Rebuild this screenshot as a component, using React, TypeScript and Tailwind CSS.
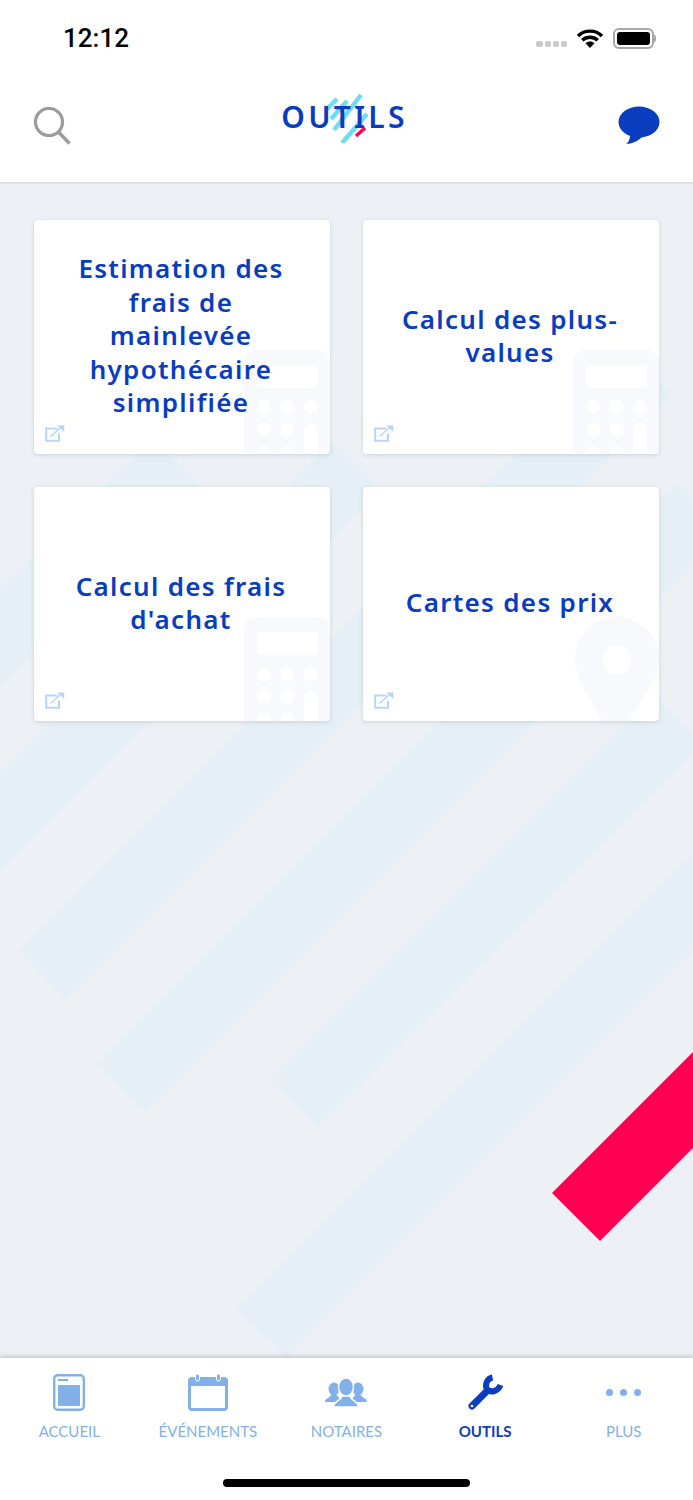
import type { ReactNode } from 'react';

const tools = [
  { title: 'Estimation des frais de mainlevée hypothécaire simplifiée', art: 'calc' },
  { title: 'Calcul des plus-values', art: 'calc' },
  { title: "Calcul des frais d'achat", art: 'calc' },
  { title: 'Cartes des prix', art: 'pin' },
];

function Calculator() {
  return (
    <svg className="absolute right-0 bottom-0" width="86" height="104" viewBox="0 0 86 104">
      <rect x="0" y="0" width="86" height="130" rx="12" fill="#f7f9fd" />
      <rect x="13" y="15" width="61" height="23" rx="4" fill="#fff" />
      <g fill="#fff">
        <circle cx="20" cy="57" r="7" />
        <circle cx="43.500" cy="57" r="7" />
        <circle cx="67" cy="57" r="7" />
        <circle cx="20" cy="80" r="7" />
        <circle cx="43.500" cy="80" r="7" />
        <circle cx="20" cy="103" r="7" />
        <circle cx="43.500" cy="103" r="7" />
        <rect x="60" y="73" width="14" height="50" rx="7" />
      </g>
    </svg>
  );
}

function Pin() {
  return (
    <svg className="absolute right-0 bottom-0" width="84" height="104" viewBox="0 0 84 104">
      <path d="M42 0C65 0 84 18 84 42C84 62 66 84 54 104H28C16 84 0 62 0 42C0 18 19 0 42 0Z" fill="#f7f9fd" />
      <circle cx="42" cy="43" r="14" fill="#fff" />
    </svg>
  );
}

function OpenIcon() {
  return (
    <svg className="absolute left-[11px] bottom-[12px]" width="20" height="17" viewBox="0 0 20 17" fill="none" stroke="#b7d5fc">
      <path d="M12 3.500H1.200V15.800H14V8.500" strokeWidth="2" />
      <path d="M5.500 11.500L16 2" strokeWidth="1.600" />
      <path d="M13 0.800H19V6.500Z" fill="#b7d5fc" strokeWidth="0.500" />
    </svg>
  );
}

function TabItem({ label, active, children }: { label: string; active?: boolean; children: ReactNode }) {
  return (
    <div className="flex flex-col items-center">
      <div className="h-[38px] flex items-center justify-center">{children}</div>
      <span
        className={
          active
            ? "mt-[10px] text-[15px] leading-[20px] font-bold text-[#0b3dbf] font-['Lato',sans-serif]"
            : "mt-[10px] text-[15px] leading-[20px] text-[#82b1e9] font-['Lato',sans-serif]"
        }
      >
        {label}
      </span>
    </div>
  );
}

export default function App() {
  return (
    <div className="w-[693px] h-[1500px] flex flex-col bg-white overflow-hidden">
      <header className="h-[184px] shrink-0 border-b-2 border-[#dfe1e3] bg-white">
        {/* status bar */}
        <div className="h-[76px] flex items-center justify-between pl-[63px] pr-[37px]">
          <span className="text-[26px] font-medium text-black font-['Roboto',sans-serif]">12:12</span>
          <div className="flex items-center">
            <div className="flex gap-[2px] mt-[12px] mr-[9px]">
              <i className="w-[7px] h-[6px] rounded-[2px] bg-[#c9c9c9]" />
              <i className="w-[6px] h-[6px] rounded-[2px] bg-[#c9c9c9]" />
              <i className="w-[6px] h-[6px] rounded-[2px] bg-[#c9c9c9]" />
              <i className="w-[6px] h-[6px] rounded-[2px] bg-[#c9c9c9]" />
            </div>
            <svg width="28" height="20" viewBox="0 0 28 20" className="mr-[9px]">
              <path d="M14 20L9.500 15.200C12 12.800 16 12.800 18.500 15.200Z" fill="#000" />
              <path d="M2 8C8.500 1.500 19.500 1.500 26 8M6.300 12.300C10.500 8.300 17.500 8.300 21.700 12.300" fill="none" stroke="#000" strokeWidth="3.400" />
            </svg>
            <div className="w-[41px] h-[21px] rounded-[6px] border-2 border-[#a8a8a8] p-[2px]">
              <div className="w-full h-full rounded-[3px] bg-black" />
            </div>
            <div className="w-[2px] h-[7px] rounded-r-[2px] bg-[#a8a8a8]" />
          </div>
        </div>
        {/* title row */}
        <div className="h-[106px] flex items-start justify-between pl-[33px] pr-[33px]">
          <svg width="38" height="38" viewBox="0 0 38 38" fill="none" stroke="#9b9b9b" className="mt-[31px]">
            <circle cx="16" cy="15" r="13.500" strokeWidth="3.200" />
            <path d="M25.500 25L36.500 36.500" strokeWidth="3.400" />
          </svg>
          <div className="relative mt-[18px]">
            <svg className="absolute left-[45px] top-[-3px]" width="44" height="52" viewBox="0 0 44 52" fill="none" stroke="#6fdcf3" strokeWidth="4.500">
              <path d="M1 18L11 8M5 28L21 10M8 39L35 4M16 52L41 23" />
              <path d="M30 45L39 37" stroke="#ff0055" strokeWidth="3.500" />
            </svg>
            <span className="relative block mt-[5px] text-[30px] leading-[36px] font-semibold tracking-[3.200px] text-[#0a3cc0] font-['Noto_Sans',sans-serif]">
              OUTILS
            </span>
          </div>
          <svg width="42" height="40" viewBox="0 0 42 40" className="mt-[30px]">
            <ellipse cx="21" cy="16" rx="20.500" ry="15.500" fill="#0a3cc0" />
            <path d="M12 28C12 33 11 36 8 38C14 38 20 35 24 31Z" fill="#0a3cc0" />
          </svg>
        </div>
      </header>

      <main className="relative flex-1 bg-[#edf1f5] overflow-hidden">
        {/* diagonal backdrop */}
        <svg className="absolute inset-0" width="693" height="1174" viewBox="0 184 693 1174">
          <g fill="#e5eff5">
            <polygon points="152.500,437.500 201,486 -60,747 -60,650" />
            <polygon points="331.500,441.500 380.500,490.500 -60,931 -60,833" />
            <polygon points="18,951 66,1000 672,394 624,346" />
            <polygon points="96,1064 146,1112 726,532 677,483" />
            <polygon points="270,1080 318,1127 703.500,743.500 655,695" />
            <polygon points="236,1310 286,1357 800,843 800,746" />
          </g>
          <polygon points="552,1193 600,1241 800,1041 752,993" fill="#ff0055" />
        </svg>
        <div className="relative grid grid-cols-2 gap-x-[33px] gap-y-[33px] pt-[36px] px-[34px]">
          {tools.map((tool) => (
            <div
              key={tool.title}
              className="relative h-[234px] rounded-[4px] bg-white shadow-[0_1px_4px_rgba(120,140,160,0.3)] overflow-hidden flex items-center justify-center px-[32px]"
            >
              {tool.art === 'calc' ? <Calculator /> : <Pin />}
              <OpenIcon />
              <p className="relative -ml-[2px] -mt-[2px] text-center text-[26px] leading-[33.500px] font-semibold tracking-[1.300px] text-[#0a3cc0] font-['Noto_Sans',sans-serif]">
                {tool.title}
              </p>
            </div>
          ))}
        </div>
      </main>

      <nav className="relative h-[142px] shrink-0 bg-white shadow-[0_-2px_4px_rgba(100,110,120,0.3)]">
        <div className="grid grid-cols-5 pt-[15px]">
          <TabItem label="ACCUEIL">
            <svg width="32" height="37" viewBox="0 0 32 37">
              <rect x="1.200" y="1.200" width="29.600" height="34.600" rx="3.500" fill="none" stroke="#82b1e9" strokeWidth="2.400" />
              <rect x="5" y="5" width="10" height="2" fill="#82b1e9" />
              <rect x="5" y="11" width="22" height="21" rx="1" fill="#82b1e9" />
            </svg>
          </TabItem>
          <TabItem label="ÉVÉNEMENTS">
            <svg width="40" height="37" viewBox="0 0 40 37">
              <rect x="0" y="3" width="40" height="34" rx="4" fill="#82b1e9" />
              <rect x="3" y="12" width="34" height="22" fill="#fff" />
              <rect x="7.500" y="0" width="4" height="7" rx="2" fill="#82b1e9" stroke="#fff" strokeWidth="1" />
              <rect x="28.500" y="0" width="4" height="7" rx="2" fill="#82b1e9" stroke="#fff" strokeWidth="1" />
            </svg>
          </TabItem>
          <TabItem label="NOTAIRES">
            <svg width="44" height="29" viewBox="0 0 44 29" fill="#82b1e9">
              <ellipse cx="10" cy="11" rx="5.500" ry="6.500" />
              <path d="M1 24C1 20 6 20 7 17H13C14 19 15 20 17 21V24Z" />
              <ellipse cx="34" cy="11" rx="5.500" ry="6.500" />
              <path d="M43 24C43 20 38 20 37 17H31C30 19 29 20 27 21V24Z" />
              <ellipse cx="22" cy="9" rx="7.500" ry="9" stroke="#fff" strokeWidth="1.500" />
              <path d="M9 29C10 23 17 23 18 18H26C27 23 34 23 35 29Z" stroke="#fff" strokeWidth="1.500" />
            </svg>
          </TabItem>
          <TabItem label="OUTILS" active>
            <svg width="37" height="37" viewBox="0 0 37 37" fill="none" stroke="#0b3dbf">
              <path d="M5 32L20 17" strokeWidth="7" strokeLinecap="round" />
              <path d="M25.500 3.500C20 4.500 17.500 10.500 20 15.500C24 19 31 17.500 33.500 11" strokeWidth="6" />
              <circle cx="5" cy="32" r="1.300" fill="#fff" stroke="none" />
            </svg>
          </TabItem>
          <TabItem label="PLUS">
            <div className="flex gap-[7px]">
              <i className="w-[7px] h-[7px] rounded-full bg-[#82b1e9]" />
              <i className="w-[7px] h-[7px] rounded-full bg-[#82b1e9]" />
              <i className="w-[7px] h-[7px] rounded-full bg-[#82b1e9]" />
            </div>
          </TabItem>
        </div>
        <div className="mt-[38px] mx-auto w-[247px] h-[8px] rounded-full bg-black" />
      </nav>
    </div>
  );
}
